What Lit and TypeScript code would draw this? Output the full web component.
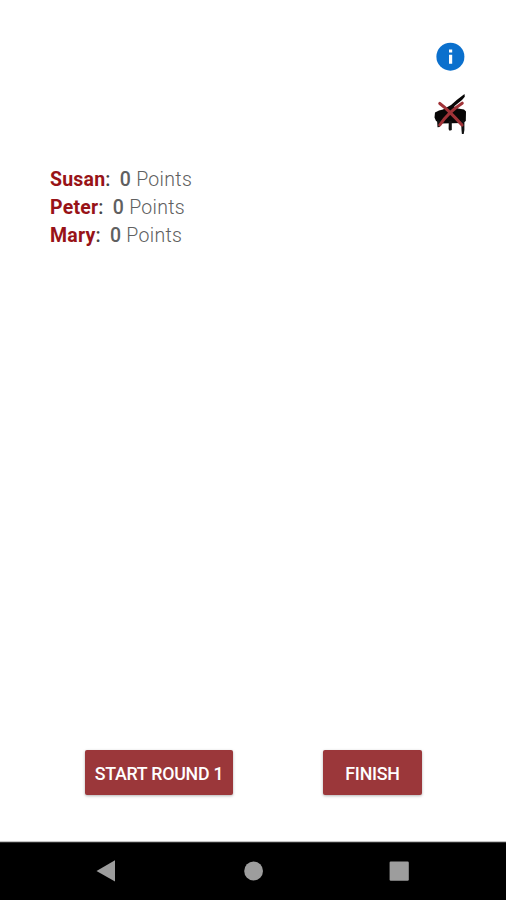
import { LitElement, html, css } from "lit";
import { customElement, property } from "lit/decorators.js";

interface Player {
  name: string;
  points: number;
}

@customElement("app-root")
export class AppRoot extends LitElement {
  @property({ type: Number }) round = 1;
  @property({ attribute: false }) players: Player[] = [
    { name: "Susan", points: 0 },
    { name: "Peter", points: 0 },
    { name: "Mary", points: 0 },
  ];

  static styles = css`
    :host {
      display: flex;
      flex-direction: column;
      width: 506px;
      height: 900px;
      background: #fff;
      font-family: Roboto, "Liberation Sans", sans-serif;
      overflow: hidden;
    }
    main {
      flex: 1;
      display: flex;
      flex-direction: column;
      min-height: 0;
    }
    .tools {
      display: flex;
      flex-direction: column;
      align-items: flex-end;
      gap: 21px;
      padding: 42px 37px 0 0;
    }
    .tools svg {
      display: block;
    }
    .info {
      margin-right: 4px;
    }
    .scores {
      list-style: none;
      margin: 0;
      padding: 32px 0 0 50px;
      flex: 1;
    }
    .scores li {
      height: 28px;
      line-height: 28px;
      font-size: 19.5px;
      letter-spacing: 0.2px;
      white-space: pre;
    }
    .name {
      font-weight: 700;
      color: #981317;
    }
    .colon {
      color: #444;
      font-weight: 500;
    }
    .value {
      font-weight: 500;
      color: #606060;
      margin-left: 9.2px;
    }
    .points {
      font-weight: 300;
      letter-spacing: 0.3px;
      color: #606060;
    }
    .actions {
      display: flex;
      gap: 90px;
      padding: 0 0 46px 85px;
    }
    button {
      height: 45px;
      padding: 0;
      border: 0;
      border-radius: 2px;
      background: #9b373a;
      color: #fff;
      font: 500 17.8px/43px Roboto, "Liberation Sans", sans-serif;
      letter-spacing: -0.25px;
      text-align: center;
      white-space: nowrap;
      box-shadow: 0 1px 3px rgba(0, 0, 0, 0.3);
    }
    button span {
      display: block;
      padding-top: 2px;
      line-height: 43px;
    }
    .start {
      width: 148px;
    }
    .finish {
      width: 99px;
    }
    nav {
      box-sizing: border-box;
      height: 59px;
      border-top: 1px solid #c4c4c4;
      background: #000;
    }
    nav svg {
      display: block;
    }
  `;

  render() {
    return html`
      <main>
        <div class="tools">
          <svg class="info" width="29" height="29" viewBox="0 0 29 29">
            <circle cx="14.4" cy="14.7" r="14" fill="#0b70cd" />
            <path d="M13 7.4h3.2v3H13zM13 12.8h3.2v9H13z" fill="#fff" />
          </svg>
          <svg width="36" height="42" viewBox="0 0 36 42">
            <path
              d="M10 17.5 18 13 24 7.8 31.5 2 31.8 4.8 29 8 21 14.5 25 16.5 31 17.5 33 19.5 32.8 29 30 31 8 31.5 3 29 1.5 25.5 2 20.5 6 18.5z"
              fill="#080606"
            />
            <path
              d="M4 28 8 29 6.8 35 4.5 35.2zM15.8 29h3v9l-2.2.7-1-1.4zM28 28h3.4v10l-.7 4h-1.8l-.4-4z"
              fill="#111"
            />
            <path
              d="M6.8 11.4C13 16 21 24 29 33M29.2 11.2C21 16.5 12 25 6.8 33"
              fill="none"
              stroke="#a03338"
              stroke-width="3.1"
              stroke-linecap="round"
            />
          </svg>
        </div>
        <ul class="scores">
          ${this.players.map(
            (p) => html`<li><span class="name">${p.name}</span><span class="colon">:</span><span class="value">${p.points}</span><span class="points"> Points</span></li>`
          )}
        </ul>
        <div class="actions">
          <button class="start"><span>START ROUND ${this.round}</span></button>
          <button class="finish"><span>FINISH</span></button>
        </div>
      </main>
      <nav>
        <svg width="506" height="58" viewBox="0 842 506 58" fill="#9d9d9d">
          <path d="M0 842.5H506" stroke="#303030" />
          <path d="M96.5 871 115 860.3V881.5z" />
          <circle cx="253.6" cy="871" r="9.4" />
          <rect x="389.6" y="861.6" width="19.2" height="19.2" rx="1.2" />
        </svg>
      </nav>
    `;
  }
}
